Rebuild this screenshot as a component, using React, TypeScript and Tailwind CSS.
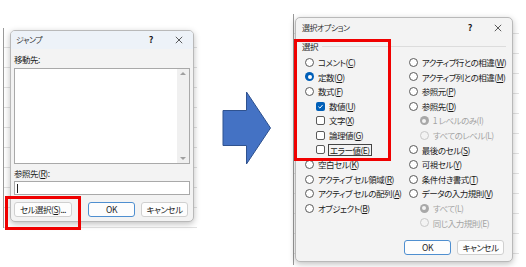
import React from "react";

const FONT = "font-['Yu_Gothic_UI','Noto_Sans_CJK_JP',sans-serif] [font-feature-settings:'palt'] tracking-[-0.5px]";

// Windows 11 style radio button
const Radio: React.FC<{ checked?: boolean; disabled?: boolean }> = ({ checked, disabled }) => {
  if (checked && disabled) {
    return (
      <span className="w-[9px] h-[9px] rounded-full bg-[#a8a8a8] flex items-center justify-center shrink-0">
        <span className="w-[4px] h-[4px] rounded-full bg-[#f3f3f3]" />
      </span>
    );
  }
  if (checked) {
    return (
      <span className="w-[9px] h-[9px] rounded-full bg-[#005fb8] flex items-center justify-center shrink-0">
        <span className="w-[4px] h-[4px] rounded-full bg-white" />
      </span>
    );
  }
  return (
    <span
      className={`w-[9px] h-[9px] rounded-full border shrink-0 ${
        disabled ? "border-[#c8c8c8] bg-[#f3f3f3]" : "border-[#5a5a5a] bg-white"
      }`}
    />
  );
};

const Check: React.FC<{ checked?: boolean }> = ({ checked }) =>
  checked ? (
    <span className="w-[9px] h-[9px] rounded-[2px] bg-[#005fb8] flex items-center justify-center shrink-0">
      <svg viewBox="0 0 10 10" className="w-[7px] h-[7px]" fill="none" stroke="white" strokeWidth={1.4}>
        <path d="M2 5.2 L4.2 7.3 L8 2.8" />
      </svg>
    </span>
  ) : (
    <span className="w-[9px] h-[9px] rounded-[2px] border border-[#5a5a5a] bg-white shrink-0" />
  );

const Key: React.FC<{ k: string }> = ({ k }) => (
  <>
    (<span className="underline underline-offset-1">{k}</span>)
  </>
);

type Opt = {
  label: string;
  k: string;
  kind?: "radio" | "check";
  checked?: boolean;
  disabled?: boolean;
  indent?: boolean;
  focus?: boolean;
};

const leftOpts: Opt[] = [
  { label: "コメント", k: "C" },
  { label: "定数", k: "O", checked: true },
  { label: "数式", k: "F" },
  { label: "数値", k: "U", kind: "check", checked: true, indent: true },
  { label: "文字", k: "X", kind: "check", indent: true },
  { label: "論理値", k: "G", kind: "check", indent: true },
  { label: "エラー値", k: "E", kind: "check", indent: true, focus: true },
  { label: "空白セル", k: "K" },
  { label: "アクティブ セル領域", k: "R" },
  { label: "アクティブ セルの配列", k: "A" },
  { label: "オブジェクト", k: "B" },
];

const rightOpts: Opt[] = [
  { label: "アクティブ行との相違", k: "W" },
  { label: "アクティブ列との相違", k: "M" },
  { label: "参照元", k: "P" },
  { label: "参照先", k: "D" },
  { label: "1 レベルのみ(I)", k: "", indent: true, disabled: true, checked: true },
  { label: "すべてのレベル(L)", k: "", indent: true, disabled: true },
  { label: "最後のセル", k: "S" },
  { label: "可視セル", k: "Y" },
  { label: "条件付き書式", k: "T" },
  { label: "データの入力規則", k: "V" },
  { label: "すべて(L)", k: "", indent: true, disabled: true, checked: true },
  { label: "同じ入力規則(E)", k: "", indent: true, disabled: true },
];

const OptionRow: React.FC<{ o: Opt }> = ({ o }) => (
  <div
    className={`h-[14.6px] flex items-center gap-[4px] ${o.indent ? "pl-[11px]" : ""} ${
      o.disabled ? "text-[#a3a3a3]" : "text-[#1b1b1b]"
    }`}
  >
    {o.kind === "check" ? <Check checked={o.checked} /> : <Radio checked={o.checked} disabled={o.disabled} />}
    <span className={`whitespace-nowrap leading-none ${o.focus ? "outline outline-1 outline-[#444] px-[1px] py-[1px]" : ""}`}>
      {o.label}
      {o.k && <Key k={o.k} />}
    </span>
  </div>
);

const Btn: React.FC<{ children: React.ReactNode; primary?: boolean; className?: string }> = ({
  children,
  primary,
  className = "",
}) => (
  <div
    className={`h-[15px] rounded-[3px] bg-[#fdfdfd] flex items-center justify-center text-[8.5px] text-[#1b1b1b] border ${
      primary ? "border-[#4f8fd0]" : "border-[#d0d0d0]"
    } ${className}`}
  >
    {children}
  </div>
);

const TitleIcons: React.FC = () => (
  <div className="flex items-center text-[#1b1b1b]">
    <span className="text-[9px] font-semibold">?</span>
    <svg viewBox="0 0 10 10" className="w-[8px] h-[8px] ml-[22px]" stroke="#333" strokeWidth={1}>
      <path d="M1 1 L9 9 M9 1 L1 9" />
    </svg>
  </div>
);

const JumpDialog: React.FC = () => (
  <div className="relative w-[194px] h-[200px] bg-white border-l border-[#9a9a9a] bg-[repeating-linear-gradient(to_bottom,transparent_0px,transparent_19px,#e2e2e2_19px,#e2e2e2_20px)] pl-[6px] pt-[2px]">
    <div className="w-[184px] h-[192px] rounded-[5px] border border-[#b9b9b9] bg-[#f3f3f3] shadow-[0_2px_6px_rgba(0,0,0,0.25)] overflow-hidden flex flex-col">
      {/* title */}
      <div className="h-[18px] bg-[#edf2f8] flex items-center justify-between pl-[5px] pr-[10px]">
        <span className="text-[8px] text-[#333]">ジャンプ</span>
        <TitleIcons />
      </div>
      <div className="px-[3px] flex flex-col text-[8.5px] text-[#1b1b1b]">
        <div className="h-[19px] flex items-center pt-[1px]">移動先:</div>
        {/* list box */}
        <div className="h-[96px] bg-white border border-[#a9a9a9] flex justify-end">
          <div className="w-[12px] bg-[#f0f0f0] flex flex-col justify-between items-center py-[3px]">
            <span className="w-0 h-0 border-l-[3px] border-r-[3px] border-b-[3px] border-l-transparent border-r-transparent border-b-[#a0a0a0]" />
            <span className="w-0 h-0 border-l-[3px] border-r-[3px] border-t-[3px] border-l-transparent border-r-transparent border-t-[#a0a0a0]" />
          </div>
        </div>
        <div className="h-[17px] flex items-center pt-[2px]">
          参照先<Key k="R" />:
        </div>
        <div className="h-[14px] bg-white border border-[#a9a9a9] flex items-center pl-[2px]">
          <span className="w-px h-[9px] bg-[#222]" />
        </div>
        <div className="flex mt-[7px]">
          <Btn className="w-[58px]">
            セル選択<Key k="S" />...
          </Btn>
          <Btn primary className="w-[47px] ml-[16px]">
            OK
          </Btn>
          <Btn className="w-[47px] ml-[6px]">キャンセル</Btn>
        </div>
      </div>
    </div>
    {/* highlight */}
    <div className="absolute left-[1px] top-[168px] w-[76px] h-[34px] border-[3px] border-[#f00000]" />
  </div>
);

const Arrow: React.FC = () => (
  <svg viewBox="0 0 50 74" className="w-[50px] h-[74px] ml-[25px] mt-[91px] shrink-0">
    <path d="M1 19.5 H24.5 V1 L48.5 37 L24.5 73 V54.5 H1 Z" fill="#4472c4" stroke="#2f528f" strokeWidth={1} />
  </svg>
);

const OptionsDialog: React.FC = () => (
  <div className="relative w-[226px] h-[251px] bg-white border-l border-[#9a9a9a] bg-[repeating-linear-gradient(to_bottom,transparent_0px,transparent_19px,#e2e2e2_19px,#e2e2e2_20px)] pl-[1px] pt-[3px] ml-[21px] mt-[14px]">
    <div className="w-[218px] h-[245px] rounded-[5px] border border-[#b9b9b9] bg-[#f3f3f3] shadow-[0_2px_6px_rgba(0,0,0,0.25)] flex flex-col">
      <div className="h-[20px] flex items-center justify-between pl-[6px] pr-[10px]">
        <span className="text-[8px] text-[#333]">選択オプション</span>
        <TitleIcons />
      </div>
      <div className="px-[6px] text-[8.5px] text-[#1b1b1b]">
        <div className="h-[16px] flex items-center gap-[4px]">
          <span>選択</span>
          <span className="flex-1 h-px bg-[#dcdcdc]" />
        </div>
        <div className="flex pl-[3px] pt-[1px]">
          <div className="w-[106px] flex flex-col">
            {leftOpts.map((o) => (
              <OptionRow key={o.label} o={o} />
            ))}
          </div>
          <div className="flex flex-col">
            {rightOpts.map((o) => (
              <OptionRow key={o.label} o={o} />
            ))}
          </div>
        </div>
        <div className="flex justify-end pr-[2px] mt-[10px]">
          <Btn primary className="w-[47px]">
            OK
          </Btn>
          <Btn className="w-[47px] ml-[6px]">キャンセル</Btn>
        </div>
      </div>
    </div>
    <div className="absolute left-[0px] top-[25px] w-[97px] h-[122px] border-[3px] border-[#f00000]" />
  </div>
);

export default function App() {
  return (
    <div className={`w-[526px] h-[267px] bg-white overflow-hidden flex items-start ${FONT}`}>
      <div className="ml-[3px] mt-[28px] shrink-0">
        <JumpDialog />
      </div>
      <Arrow />
      <OptionsDialog />
    </div>
  );
}
